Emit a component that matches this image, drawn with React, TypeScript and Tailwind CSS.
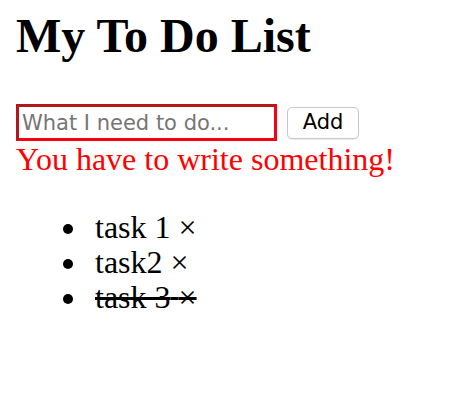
import React, { useState } from 'react';

interface Task {
  id: number;
  text: string;
  done: boolean;
}

const INITIAL_TASKS: Task[] = [
  { id: 1, text: 'task 1', done: false },
  { id: 2, text: 'task2', done: false },
  { id: 3, text: 'task 3', done: true },
];

export default function App() {
  const [tasks, setTasks] = useState<Task[]>(INITIAL_TASKS);
  const [value, setValue] = useState('');
  const [error, setError] = useState(true);

  const addTask = (e: React.FormEvent) => {
    e.preventDefault();
    if (!value.trim()) {
      setError(true);
      return;
    }
    setTasks([...tasks, { id: Date.now(), text: value.trim(), done: false }]);
    setValue('');
    setError(false);
  };

  return (
    <div className="min-h-screen bg-white px-4 text-black font-['Liberation_Serif','Times_New_Roman',serif]">
      <h2 className="pt-[9px] text-[48px] leading-[53px] font-bold">My To Do List</h2>

      {/* Add form */}
      <form onSubmit={addTask} className="mt-[42px] flex items-center gap-[10px]">
        <input
          value={value}
          onChange={e => setValue(e.target.value)}
          placeholder="What I need to do..."
          className={`w-[261px] h-[37px] pl-[3px] border-[3px] bg-white text-[21px] outline-none font-['DejaVu_Sans',sans-serif] placeholder:text-[#757575] ${
            error
              ? 'border-t-[#b3171c] border-l-[#b3171c] border-r-[#fb0010] border-b-[#fb0010]'
              : 'border-gray-400'
          }`}
        />
        <button
          type="submit"
          className="w-[72px] h-[32px] rounded-[5px] border border-[#c8c8c8] bg-white text-[21px] leading-none shadow-[0_1px_1px_rgba(0,0,0,0.08)] font-['DejaVu_Sans',sans-serif]"
        >
          Add
        </button>
      </form>
      {error && <p className="text-[32px] leading-[37px] text-[#ff0000]">You have to write something!</p>}

      {/* Tasks */}
      <ul className="mt-[32px] pl-[47px] text-[32px] leading-[35px]">
        {tasks.map(task => (
          <li key={task.id} className="flex items-center">
            <span className="w-[10px] h-[10px] mt-[3px] mr-[22px] rounded-full bg-black flex-shrink-0" />
            <span className={task.done ? 'line-through' : ''}>
              <span onClick={() => setTasks(tasks.map(t => (t.id === task.id ? { ...t, done: !t.done } : t)))}>
                {task.text}
              </span>{' '}
              <span className="cursor-pointer" onClick={() => setTasks(tasks.filter(t => t.id !== task.id))}>
                ×
              </span>
            </span>
          </li>
        ))}
      </ul>
    </div>
  );
}
